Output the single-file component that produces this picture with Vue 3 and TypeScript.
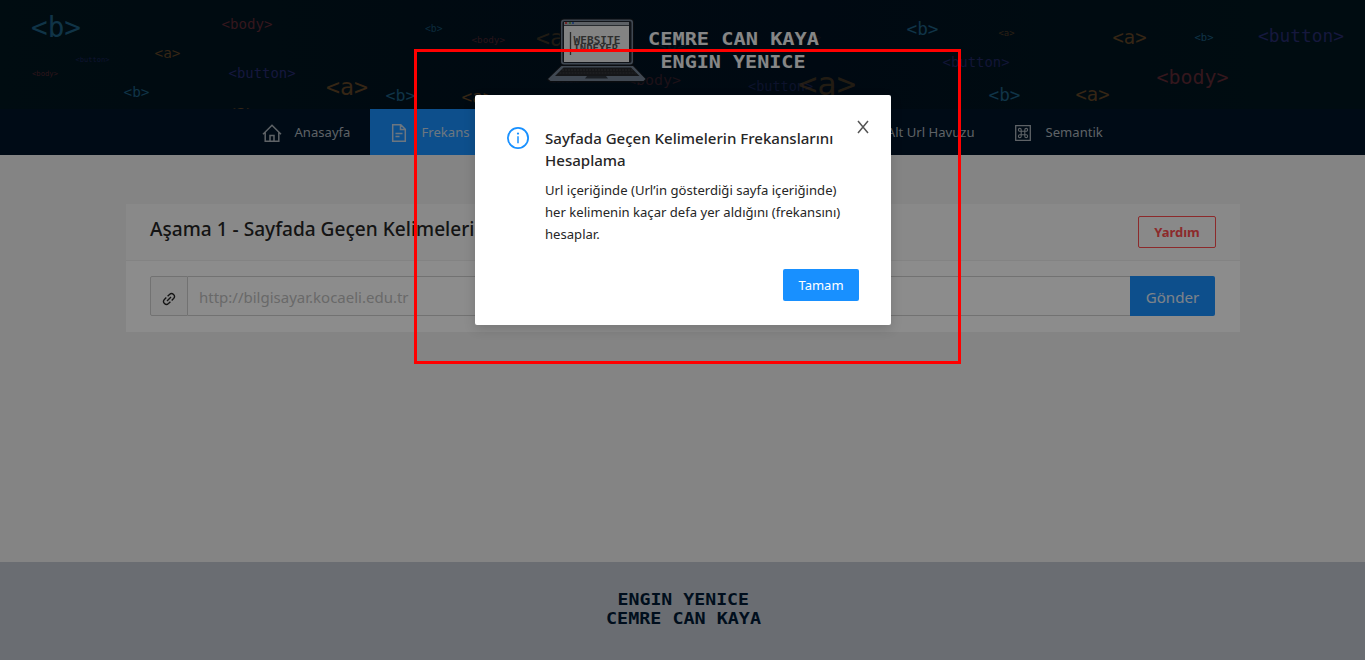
<script setup lang="ts">
interface Tag { t: string; x: number; y: number; w: number; o?: number }

const colors: Record<string, string> = { b: '#1e5f82', a: '#624527', body: '#602a35', button: '#282c70' }

const tags: Tag[] = [
  { t: 'b', x: 31, y: 36.5, w: 50 },
  { t: 'body', x: 221.5, y: 29, w: 51 },
  { t: 'a', x: 154.5, y: 57.5, w: 26 },
  { t: 'button', x: 75.5, y: 61.5, w: 34, o: 0.7 },
  { t: 'body', x: 32, y: 76, w: 26, o: 0.85 },
  { t: 'button', x: 228.5, y: 77.5, w: 67 },
  { t: 'b', x: 123.5, y: 96.5, w: 26 },
  { t: 'a', x: 326, y: 95, w: 42 },
  { t: 'a', x: 225.5, y: 117.5, w: 31 },
  { t: 'b', x: 425, y: 31.5, w: 17.5, o: 0.8 },
  { t: 'body', x: 471.5, y: 43, w: 33.5, o: 0.75 },
  { t: 'a', x: 536, y: 46, w: 42, o: 0.6 },
  { t: 'b', x: 385.5, y: 101, w: 30 },
  { t: 'a', x: 461.5, y: 102.5, w: 32 },
  { t: 'body', x: 627, y: 85, w: 54, o: 0.55 },
  { t: 'b', x: 656, y: 50, w: 32, o: 0.25 },
  { t: 'body', x: 786, y: 41, w: 35, o: 0.3 },
  { t: 'button', x: 548, y: 83, w: 34, o: 0.4 },
  { t: 'button', x: 748, y: 91, w: 65, o: 0.6 },
  { t: 'a', x: 798, y: 94.5, w: 58, o: 0.65 },
  { t: 'b', x: 906.5, y: 34.5, w: 32 },
  { t: 'a', x: 998.5, y: 35.5, w: 16, o: 0.8 },
  { t: 'button', x: 942.5, y: 66.5, w: 67, o: 0.85 },
  { t: 'b', x: 988.5, y: 100.5, w: 32 },
  { t: 'a', x: 1112.5, y: 43.5, w: 34 },
  { t: 'b', x: 1194.5, y: 40.5, w: 19 },
  { t: 'button', x: 1258, y: 41.5, w: 86 },
  { t: 'body', x: 1156.5, y: 84, w: 72 },
  { t: 'a', x: 1075.5, y: 100.5, w: 34 },
]

const fontSize = (tag: Tag): number => tag.w / (tag.t.length + 2) / 0.602
</script>

<template>
  <div class="page">
    <header class="banner">
      <svg width="1365" height="109" viewBox="0 0 1365 109">
        <defs>
          <linearGradient id="bg" x1="0" x2="1" y1="0" y2="0">
            <stop offset="0" stop-color="#001620" />
            <stop offset="0.3" stop-color="#001320" />
            <stop offset="0.6" stop-color="#001221" />
            <stop offset="1" stop-color="#00171f" />
          </linearGradient>
        </defs>
        <rect width="1365" height="109" fill="url(#bg)" />
        <text
          v-for="(tag, i) in tags" :key="i" class="code"
          :x="tag.x" :y="tag.y" :font-size="fontSize(tag)" :textLength="tag.w"
          :fill="colors[tag.t]" :opacity="tag.o ?? 1"
        >&lt;{{ tag.t }}&gt;</text>

        <rect x="560" y="18.5" width="74" height="47" rx="4" fill="#14181e" />
        <rect x="561" y="19.5" width="72" height="45" rx="3" fill="#758496" />
        <rect x="562.5" y="21" width="69" height="42" rx="2" fill="#20262e" />
        <g shape-rendering="crispEdges">
          <rect x="564" y="22" width="65" height="40" fill="#efefef" />
          <rect x="564" y="22" width="65" height="3" fill="#a9b1ba" />
          <rect x="565" y="22" width="2" height="2" fill="#d04444" />
          <rect x="569" y="22" width="2" height="2" fill="#5ea55e" />
          <rect x="572" y="22" width="2" height="2" fill="#4676c8" />
          <rect x="564" y="25" width="65" height="1" fill="#4a5058" />
        </g>
        <path d="M561 65H633.5L647 79.5L644 82.5H550L546.5 79.5Z" fill="#14181e" />
        <path d="M561.5 66H633L645.5 79L643.5 81H550.5L548 79Z" fill="#758496" />
        <path d="M563.5 67.5H631L639.5 76H555Z" fill="#27282c" />
        <path d="M562 70H633M559.5 73H636" stroke="#404247" stroke-width="1" stroke-dasharray="2 1" />
        <path d="M587 76H606L608 78.5H585Z" fill="#303741" />
        <path d="M570.5 32V55" stroke="#4c4c4c" stroke-width="1.3" />
        <text class="pixel" x="573.5" y="44" font-size="9.6" textLength="47" lengthAdjust="spacingAndGlyphs" fill="#555">WEBSITE</text>
        <text class="pixel" x="573.5" y="52" font-size="9.6" textLength="44.5" lengthAdjust="spacingAndGlyphs" fill="#555">INDEXER</text>
        <text class="pixel" x="648" y="45" font-size="18" textLength="171" lengthAdjust="spacingAndGlyphs" fill="#f5f5f5">CEMRE CAN KAYA</text>
        <text class="pixel" x="660.5" y="68" font-size="18" textLength="145" lengthAdjust="spacingAndGlyphs" fill="#f5f5f5">ENGIN YENICE</text>
      </svg>
    </header>

    <nav class="menu">
      <a class="item home">
        <svg width="20" height="20" viewBox="0 0 20 20" fill="none" stroke="currentColor" stroke-width="1.5">
          <path d="M1 11.2L10 2.2L19 11.2M3.2 9.5V18.2H16.8V9.5M8 18V12.6H12V18" />
        </svg>
        <span>Anasayfa</span>
      </a>
      <a class="item active">
        <svg width="16" height="20" viewBox="0 0 16 20" fill="none" stroke="currentColor" stroke-width="1.5">
          <path d="M1.7 1.7H9.8L14.3 6.2V18.3H1.7ZM9.5 2V6.6H14M4.5 10.4H11.5M4.5 13.4H8.5" />
        </svg>
        <span>Frekans</span>
      </a>
      <a class="item pool"><span>Alt Url Havuzu</span></a>
      <a class="item semantic">
        <svg width="16" height="18" viewBox="0 0 16 18" fill="none" stroke="currentColor" stroke-width="1.3">
          <path d="M.7 1.7H15.3V16.3H.7Z" />
          <path d="M6.2 7.2H4.8A1.4 1.4 0 1 1 6.2 5.8V12.2A1.4 1.4 0 1 1 4.8 10.8H11.2A1.4 1.4 0 1 1 9.8 12.2V5.8A1.4 1.4 0 1 1 11.2 7.2Z" stroke-width="1.1" />
        </svg>
        <span>Semantik</span>
      </a>
    </nav>

    <main class="content">
      <section class="card">
        <div class="card-head">
          <h2>Aşama 1 - Sayfada Geçen Kelimeleri</h2>
          <button class="help">Yardım</button>
        </div>
        <div class="card-body">
          <div class="addon">
            <svg width="14" height="14" viewBox="0 0 14 14" fill="none" stroke="#262626" stroke-width="1.35">
              <path d="M5.6 4.3L7.5 2.4A2.9 2.9 0 0 1 11.6 6.5L9.7 8.4M8.4 9.7L6.5 11.6A2.9 2.9 0 0 1 2.4 7.5L4.3 5.6M5 9L9 5" />
            </svg>
          </div>
          <div class="input">http://bilgisayar.kocaeli.edu.tr</div>
          <button class="send">Gönder</button>
        </div>
      </section>
    </main>

    <footer class="footer">
      <svg width="160" height="40" viewBox="0 0 160 40" fill="#001a35">
        <text class="pixel" x="14.5" y="15" font-size="16" textLength="131.5" lengthAdjust="spacingAndGlyphs">ENGIN YENICE</text>
        <text class="pixel" x="3" y="34" font-size="16" textLength="155" lengthAdjust="spacingAndGlyphs">CEMRE CAN KAYA</text>
      </svg>
    </footer>

    <div class="mask"></div>

    <div class="modal" role="dialog">
      <div class="modal-body">
        <svg class="info" width="22" height="22" viewBox="0 0 22 22">
          <circle cx="11" cy="11" r="10.1" fill="none" stroke="#1890ff" stroke-width="1.8" />
          <circle cx="11" cy="6.6" r="1.1" fill="#1890ff" />
          <path d="M11 9.3V16.2" stroke="#1890ff" stroke-width="1.5" />
        </svg>
        <div class="message">
          <h3><span>Sayfada Geçen Kelimelerin Frekanslarını</span><br>Hesaplama</h3>
          <p>Url içeriğinde (Url’in gösterdiği sayfa içeriğinde)<br>her kelimenin kaçar defa yer aldığını (frekansını)<br>hesaplar.</p>
        </div>
      </div>
      <div class="actions"><button class="ok">Tamam</button></div>
      <svg class="close" width="14" height="14" viewBox="0 0 14 14">
        <path d="M2 1L12 13M12 1L2 13" stroke="#555" stroke-width="1.5" />
      </svg>
    </div>

    <div class="frame"></div>
  </div>
</template>

<style>
body { margin: 0; overflow: hidden; }
</style>

<style scoped>
.page {
  position: relative;
  display: flex;
  flex-direction: column;
  width: 1365px;
  height: 660px;
  overflow: hidden;
  background: #f0f0f0;
  font-family: "Noto Sans", "Open Sans", sans-serif;
  font-size: 13.1px;
  color: #262626;
}
* { box-sizing: border-box; }
button { font-family: inherit; margin: 0; padding: 0; border: 0; }
.banner { height: 109px; flex: none; }
.banner svg, .footer svg { display: block; }
.code { font-family: "DejaVu Sans Mono", monospace; }
.pixel { font-family: "DejaVu Sans Mono", monospace; font-weight: 700; }

.menu {
  display: flex;
  justify-content: center;
  flex: none;
  height: 46px;
  background: #001529;
}
.item {
  display: flex;
  align-items: center;
  height: 46px;
  padding: 0 20px;
  color: #abb3ba;
  white-space: nowrap;
}
.item svg { flex: none; margin-top: 2px; }
.home { width: 127px; padding-left: 19px; gap: 13px; }
.active { width: 119px; padding-left: 21px; gap: 15px; background: #1890ff; color: #c5d8ea; }
.pool { width: 506px; justify-content: flex-end; }
.semantic { width: 128px; gap: 15px; }

.content { flex: 1; padding: 49px 125px 0 126px; }
.card { height: 128px; background: #fff; }
.card-head {
  display: flex;
  justify-content: space-between;
  height: 57px;
  padding: 12px 24px 0;
  background: #fafafa;
  border-bottom: 1px solid #efefef;
}
.card-head h2 {
  margin: 0;
  font-size: 19.1px;
  line-height: 26px;
  font-weight: 500;
  white-space: nowrap;
}
.help {
  width: 78px;
  height: 32px;
  border: 1px solid #ff4d4f;
  border-radius: 2px;
  background: transparent;
  color: #ff4d4f;
  font-size: 13px;
  font-weight: 700;
}
.card-body { display: flex; padding: 15px 25px 0 24px; }
.addon {
  display: flex;
  align-items: center;
  justify-content: center;
  width: 38px;
  height: 40px;
  padding-top: 5px;
  background: #fafafa;
  border: 1px solid #d0d0d0;
  border-radius: 2px 0 0 2px;
}
.input {
  flex: 1;
  height: 40px;
  padding-left: 11px;
  border: solid #d0d0d0;
  border-width: 1px 0;
  color: #bfbfbf;
  font-size: 15px;
  line-height: 40px;
}
.send {
  width: 85px;
  height: 40px;
  padding-top: 2px;
  border-radius: 0 2px 2px 0;
  background: #1890ff;
  color: #e4eefa;
  font-size: 15.1px;
}
.footer {
  display: flex;
  justify-content: center;
  flex: none;
  height: 98px;
  padding-top: 28px;
  background: #c1c7cf;
}

.mask { position: absolute; inset: 0; background: rgba(0, 0, 0, 0.45); }
.modal {
  position: absolute;
  left: 475px;
  top: 95px;
  width: 416px;
  height: 230px;
  padding: 32px 32px 24px;
  border-radius: 2px;
  background: #fff;
  box-shadow: 0 4px 12px rgba(0, 0, 0, 0.15);
}
.modal-body { display: flex; gap: 16px; }
.info { flex: none; }
.message h3 { margin: 0; font-size: 15.05px; line-height: 22px; font-weight: 500; white-space: nowrap; }
.message p { margin: 8px 0 0; line-height: 22px; white-space: nowrap; }
.actions { display: flex; justify-content: flex-end; margin-top: 24px; }
.ok {
  width: 76px;
  height: 32px;
  border-radius: 2px;
  background: #1890ff;
  color: #fff;
  font-size: 13px;
}
.close { position: absolute; right: 21px; top: 25px; }
.frame {
  position: absolute;
  left: 414px;
  top: 49px;
  width: 547px;
  height: 315px;
  border: 3px solid #f00;
}
</style>
